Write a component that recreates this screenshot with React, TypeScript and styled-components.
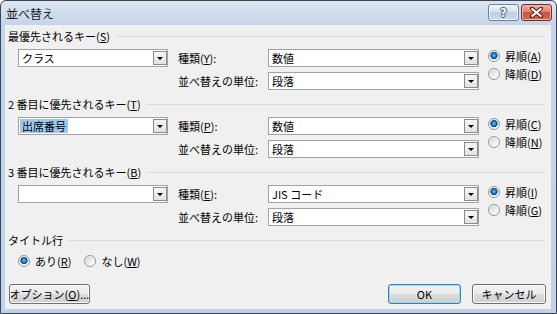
import React from "react";
import styled, { createGlobalStyle } from "styled-components";

const Global = createGlobalStyle`
  html, body { margin: 0; padding: 0; background: #ffffff; }
  body {
    font-family: "Noto Sans CJK JP", "Noto Sans", sans-serif;
    font-size: 11px;
    color: #000;
  }
  * { box-sizing: border-box; }
`;

const Window = styled.div`
  width: 557px;
  height: 314px;
  border: 1px solid #3a4656;
  border-radius: 6px 6px 0 0;
  background: linear-gradient(#dce6f2 0px, #c4d5ea 24px, #bfd2e9 100%);
  display: flex;
  flex-direction: column;
  padding: 0 5px 4px 4px;
  overflow: hidden;
`;

const TitleBar = styled.div`
  height: 24px;
  display: flex;
  align-items: center;
  margin-right: -1px;
  padding-left: 1px;
`;

const Title = styled.div`
  flex: 1;
  font-size: 12px;
  line-height: 14px;
  color: #1a1a1a;
  margin-top: 2px;
`;

const CaptionButtons = styled.div`
  display: flex;
  gap: 2px;
  align-self: flex-start;
  margin-top: 3px;
`;

const CaptionButton = styled.div<{ $close?: boolean }>`
  width: 31px;
  height: 17px;
  border-radius: 3px;
  border: 1px solid ${(p) => (p.$close ? "#7a2a20" : "#6a84a4")};
  box-shadow: inset 0 0 0 1px ${(p) => (p.$close ? "#eeb2a6" : "#f0f5fb")};
  background: ${(p) =>
    p.$close
      ? "linear-gradient(#eab0a2 0%, #dc8674 45%, #c95440 50%, #d56a55 100%)"
      : "linear-gradient(#edf3fa 0%, #d8e4f2 45%, #bccfe6 50%, #c9daee 100%)"};
  display: flex;
  align-items: center;
  justify-content: center;
`;

const HelpGlyph = styled.span`
  font-family: "DejaVu Sans", sans-serif;
  font-weight: bold;
  font-size: 12px;
  line-height: 12px;
  color: #f4f7fb;
  text-shadow: 1px 0 #4a5a70, -1px 0 #4a5a70, 0 1px #4a5a70, 0 -1px #4a5a70;
`;

const Client = styled.div`
  flex: 1;
  background: #f0f0f0;
  display: flex;
  flex-direction: column;
  padding: 4px 6px 5px 3px;
`;

const Section = styled.div`
  display: flex;
  flex-direction: column;
  gap: 6px;
  margin-bottom: 7px;
`;

const Header = styled.div`
  display: flex;
  align-items: center;
  height: 14px;
  line-height: 14px;
  gap: 5px;
  white-space: nowrap;
  &::after {
    content: "";
    flex: 1;
    height: 1px;
    background: #d5dfe5;
    margin-top: 1px;
  }
`;

const Text = styled.span`
  white-space: nowrap;
`;

const SortGrid = styled.div`
  display: grid;
  grid-template-columns: 150px 100px 211px auto;
  grid-template-rows: 18px 18px;
  row-gap: 5px;
  padding-left: 10px;
`;

const Combo = styled.div<{ $col: number; $row: number }>`
  grid-column: ${(p) => p.$col};
  grid-row: ${(p) => p.$row};
  height: 18px;
  background: #ffffff;
  border: 1px solid #a3a3a3;
  display: flex;
  align-items: center;
  padding-left: 1px;
`;

const ComboValue = styled.span<{ $selected?: boolean }>`
  flex: 1;
  display: flex;
  align-items: center;
  height: 14px;
  line-height: 14px;
  white-space: nowrap;
  span {
    padding: 0 2px;
    background: ${(p) => (p.$selected ? "#9fc8ef" : "transparent")};
  }
`;

const DropButton = styled.div`
  width: 14px;
  height: 14px;
  border: 1px solid #8c8c8c;
  background: linear-gradient(#f6f6f6, #e2e2e2);
  display: flex;
  align-items: center;
  justify-content: center;
  &::before {
    content: "";
    width: 0;
    height: 0;
    border-left: 3px solid transparent;
    border-right: 3px solid transparent;
    border-top: 3px solid #000;
    margin-top: 1px;
  }
`;

const FieldLabel = styled.div<{ $row: number }>`
  grid-column: 2;
  grid-row: ${(p) => p.$row};
  padding-left: 10px;
  line-height: 18px;
  white-space: nowrap;
`;

const OrderCol = styled.div`
  grid-column: 4;
  grid-row: 1 / span 2;
  padding-left: 9px;
  display: flex;
  flex-direction: column;
  gap: 4px;
`;

const RadioItem = styled.label`
  display: flex;
  align-items: center;
  gap: 5px;
  height: 14px;
  line-height: 14px;
  white-space: nowrap;
`;

const RadioDot = styled.span<{ $checked?: boolean }>`
  width: 12px;
  height: 12px;
  flex: none;
  border-radius: 50%;
  border: 1px solid #8f99a6;
  background: ${(p) =>
    p.$checked
      ? "radial-gradient(circle at 50% 45%, #7cc6f4 0px, #2a87d0 1.6px, #0d5ea8 2.8px, #0b4a86 3.4px, rgba(255,255,255,0) 3.9px), linear-gradient(135deg, #d6d6d6, #fbfbfb)"
      : "linear-gradient(135deg, #cfcfcf, #f7f7f7 70%, #ffffff)"};
  box-shadow: inset 0 0 0 1px #f4f4f4;
`;

const TitleRow = styled.div`
  display: flex;
  align-items: center;
  gap: 13px;
  padding-left: 10px;
  margin-top: 1px;
`;

const Footer = styled.div`
  margin-top: auto;
  display: flex;
  align-items: center;
  gap: 11px;
  padding-left: 1px;
  margin-right: -1px;
`;

const Spacer = styled.div`
  flex: 1;
`;

const Button = styled.div<{ $w: number; $default?: boolean }>`
  width: ${(p) => p.$w}px;
  height: 20px;
  border-radius: 3px;
  border: 1px solid ${(p) => (p.$default ? "#3c7fb1" : "#707070")};
  box-shadow: inset 0 0 0 1px ${(p) => (p.$default ? "#8fdcfb" : "#fbfbfb")};
  background: linear-gradient(#f2f2f2 0%, #ebebeb 50%, #dddddd 50%, #cfcfcf 100%);
  display: flex;
  align-items: center;
  justify-content: center;
  line-height: 14px;
  white-space: nowrap;
`;

const U = styled.u`
  text-underline-offset: 1px;
`;

type Group = {
  title: React.ReactNode;
  key: string;
  selected?: boolean;
  typeLabel: React.ReactNode;
  typeValue: string;
  asc: React.ReactNode;
  desc: React.ReactNode;
};

const groups: Group[] = [
  {
    title: (
      <>
        最優先されるキー(<U>S</U>)
      </>
    ),
    key: "クラス",
    typeLabel: (
      <>
        種類(<U>Y</U>):
      </>
    ),
    typeValue: "数値",
    asc: (
      <>
        昇順(<U>A</U>)
      </>
    ),
    desc: (
      <>
        降順(<U>D</U>)
      </>
    ),
  },
  {
    title: (
      <>
        2 番目に優先されるキー(<U>T</U>)
      </>
    ),
    key: "出席番号",
    selected: true,
    typeLabel: (
      <>
        種類(<U>P</U>):
      </>
    ),
    typeValue: "数値",
    asc: (
      <>
        昇順(<U>C</U>)
      </>
    ),
    desc: (
      <>
        降順(<U>N</U>)
      </>
    ),
  },
  {
    title: (
      <>
        3 番目に優先されるキー(<U>B</U>)
      </>
    ),
    key: "",
    typeLabel: (
      <>
        種類(<U>E</U>):
      </>
    ),
    typeValue: "JIS コード",
    asc: (
      <>
        昇順(<U>I</U>)
      </>
    ),
    desc: (
      <>
        降順(<U>G</U>)
      </>
    ),
  },
];

const CloseIcon = () => (
  <svg width="13" height="11" viewBox="0 0 13 11">
    <path d="M2 1.5 L11 9.5 M11 1.5 L2 9.5" stroke="#5a1a12" strokeWidth="4" strokeLinecap="square" />
    <path d="M2.3 2 L10.7 9 M10.7 2 L2.3 9" stroke="#ffffff" strokeWidth="2" strokeLinecap="square" />
  </svg>
);

export default function App() {
  return (
    <>
      <Global />
      <Window>
        <TitleBar>
          <Title>並べ替え</Title>
          <CaptionButtons>
            <CaptionButton>
              <HelpGlyph>?</HelpGlyph>
            </CaptionButton>
            <CaptionButton $close>
              <CloseIcon />
            </CaptionButton>
          </CaptionButtons>
        </TitleBar>
        <Client>
          {groups.map((g, i) => (
            <Section key={i}>
              <Header>
                <Text>{g.title}</Text>
              </Header>
              <SortGrid>
                <Combo $col={1} $row={1}>
                  <ComboValue $selected={g.selected}>
                    <span>{g.key}</span>
                  </ComboValue>
                  <DropButton />
                </Combo>
                <FieldLabel $row={1}>{g.typeLabel}</FieldLabel>
                <Combo $col={3} $row={1}>
                  <ComboValue>
                    <span>{g.typeValue}</span>
                  </ComboValue>
                  <DropButton />
                </Combo>
                <FieldLabel $row={2}>並べ替えの単位:</FieldLabel>
                <Combo $col={3} $row={2}>
                  <ComboValue>
                    <span>段落</span>
                  </ComboValue>
                  <DropButton />
                </Combo>
                <OrderCol>
                  <RadioItem>
                    <RadioDot $checked />
                    <Text>{g.asc}</Text>
                  </RadioItem>
                  <RadioItem>
                    <RadioDot />
                    <Text>{g.desc}</Text>
                  </RadioItem>
                </OrderCol>
              </SortGrid>
            </Section>
          ))}
          <Section>
            <Header>
              <Text>タイトル行</Text>
            </Header>
            <TitleRow>
              <RadioItem>
                <RadioDot $checked />
                <Text>
                  あり(<U>R</U>)
                </Text>
              </RadioItem>
              <RadioItem>
                <RadioDot />
                <Text>
                  なし(<U>W</U>)
                </Text>
              </RadioItem>
            </TitleRow>
          </Section>
          <Footer>
            <Button $w={81}>
              <Text>
                オプション(<U>O</U>)...
              </Text>
            </Button>
            <Spacer />
            <Button $w={73} $default>
              OK
            </Button>
            <Button $w={74}>キャンセル</Button>
          </Footer>
        </Client>
      </Window>
    </>
  );
}
